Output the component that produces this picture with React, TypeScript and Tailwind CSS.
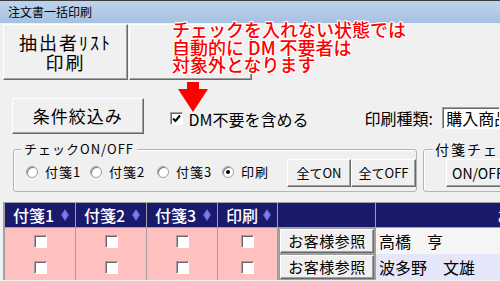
const raised =
  'bg-[#f0f0f0] border border-t-white border-l-white border-r-[#696969] border-b-[#696969] shadow-[inset_-1px_-1px_0_#a0a0a0]';
const sunken =
  'bg-white border border-t-[#a0a0a0] border-l-[#a0a0a0] border-r-white border-b-white shadow-[inset_1px_1px_0_#696969]';

function Radio({ label, checked, width }: { label: string; checked?: boolean; width: string }) {
  return (
    <div className={`flex items-center gap-[7px] mb-[3px] ${width}`}>
      <div className="w-[12px] h-[12px] rounded-full bg-white border border-[#a0a0a0] shadow-[inset_1px_1px_0_#808080] flex items-center justify-center">
        {checked && <div className="w-[4px] h-[4px] rounded-full bg-black" />}
      </div>
      <span className="text-[13px] leading-[14px] tracking-[1px]">{label}</span>
    </div>
  );
}

function CheckBox() {
  return <div className={`w-[13px] h-[13px] ${sunken}`} />;
}

function Diamond() {
  return (
    <svg width="8" height="12" viewBox="0 0 8 12" className="shrink-0">
      <polygon points="4,0 8,6 4,12 0,6" fill="#6a6ae0" />
      <polygon points="4,2 6,6 4,10 2,6" fill="#8080ee" />
    </svg>
  );
}

function HeadCell({ label }: { label: string }) {
  return (
    <div className="h-[25px] bg-[#1a1a6c] border-b border-[#a0a0a0] flex items-center justify-between pl-[8px] pr-[6px] text-white text-[16px] leading-[18px] font-medium">
      <span>{label}</span>
      <Diamond />
    </div>
  );
}

function PinkCell() {
  return (
    <div className="h-[26px] bg-[#ffc0c0] flex items-center justify-center">
      <CheckBox />
    </div>
  );
}

function Row({ name, tint }: { name: string; tint: string }) {
  return (
    <>
      <PinkCell />
      <PinkCell />
      <PinkCell />
      <PinkCell />
      <div className="h-[26px] bg-[#a0a0a0] pl-[2px] flex items-center">
        <button className={`w-[94px] h-[24px] ${raised} text-[15px] leading-[16px] tracking-[0.5px] text-black`}>
          お客様参照
        </button>
      </div>
      <div className={`h-[26px] ${tint} pl-[3px] flex items-center text-[16px] leading-[18px] text-black whitespace-nowrap`}>
        {name}
      </div>
    </>
  );
}

export default function App() {
  return (
    <div className="w-[500px] h-[281px] overflow-hidden bg-[#f0f0f0] relative font-['Noto_Sans_CJK_JP',sans-serif] text-black">
      {/* title bar */}
      <div className="h-[23px] border-t border-[#3c3c3c] bg-linear-to-b from-[#bed4ec] to-[#a6c1e0] pl-[8px] flex items-center text-[12px] leading-[14px]">
        注文書一括印刷
      </div>

      {/* big buttons */}
      <div className="flex pl-[3px] mt-[1px] gap-[1px]">
        <button className={`w-[125px] h-[56px] ${raised} flex flex-col items-center justify-center text-[18px] leading-[20px] tracking-[2px]`}>
          <span>抽出者ﾘｽﾄ</span>
          <span>印刷</span>
        </button>
        <button className={`w-[123px] h-[56px] ${raised}`} />
      </div>

      {/* filter row */}
      <div className="flex items-center mt-[18px] h-[36px]">
        <button className={`ml-[12px] w-[137px] h-[36px] ${raised} text-[17px] leading-[18px] tracking-[1px]`}>
          条件絞込み
        </button>
        <div className="ml-[26px] w-[203px] flex items-center gap-[6px] mt-[5px]">
          <div className={`w-[13px] h-[13px] ${sunken} flex items-center justify-center`}>
            <svg width="9" height="9" viewBox="0 0 9 9">
              <path d="M1 4.5 L3.5 7 L8 1.5" stroke="#000" strokeWidth="2" fill="none" />
            </svg>
          </div>
          <span className="text-[16px] leading-[18px]">DM不要を含める</span>
        </div>
        <div className="w-[81px] text-[16px] leading-[18px] mt-[3px]">印刷種類:</div>
        <div className={`w-[60px] h-[22px] mt-[4px] ${sunken} pl-[3px] flex items-center text-[16px] leading-[18px] whitespace-nowrap overflow-hidden`}>
          購入商品
        </div>
      </div>

      {/* check on/off groups */}
      <div className="flex mt-[15px]">
        <div className="relative ml-[13px] w-[415px] h-[43px] border border-[#b4b4b4] rounded-[3px] shadow-[inset_1px_1px_0_#fff]">
          <span className="absolute -top-[8px] left-[7px] bg-[#f0f0f0] px-[3px] text-[13px] leading-[14px] tracking-[1px]">
            チェックON/OFF
          </span>
          <div className="flex items-center h-full pl-[12px] pt-[5px]">
            <Radio label="付箋1" width="w-[64px]" />
            <Radio label="付箋2" width="w-[67px]" />
            <Radio label="付箋3" width="w-[65px]" />
            <Radio label="印刷" width="w-[65px]" checked />
            <button className={`w-[64px] h-[28px] ${raised} text-[13px] leading-[14px]`}>全てON</button>
            <button className={`w-[65px] h-[28px] ${raised} text-[13px] leading-[14px]`}>全てOFF</button>
          </div>
        </div>
        <div className="relative ml-[6px] w-[100px] h-[43px] border border-[#b4b4b4] rounded-[3px] shadow-[inset_1px_1px_0_#fff]">
          <span className="absolute -top-[9px] left-[9px] bg-[#f0f0f0] px-[2px] text-[14px] leading-[16px] tracking-[2px] whitespace-nowrap">
            付箋チェック
          </span>
          <div className="pl-[22px] pt-[9px]">
            <button className={`w-[80px] h-[28px] ${raised} text-[14px] leading-[16px] text-left pl-[5px]`}>
              ON/OFF
            </button>
          </div>
        </div>
      </div>

      {/* table */}
      <div className="mt-[10px] ml-[3px] border-l-2 border-t border-[#a0a0a0] bg-[#a0a0a0]">
        <div className="grid grid-cols-[70px_70px_70px_59px_97px_124px] gap-x-px">
          <HeadCell label="付箋1" />
          <HeadCell label="付箋2" />
          <HeadCell label="付箋3" />
          <HeadCell label="印刷" />
          <div className="h-[25px] bg-[#1a1a6c] border-b border-[#a0a0a0]" />
          <div className="h-[25px] bg-[#1a1a6c] border-b border-[#a0a0a0] pl-[121px] flex items-center text-white text-[16px] leading-[18px] whitespace-nowrap overflow-hidden">
            お客様名
          </div>
          <Row name="高橋　亨" tint="bg-[#f5f5f5]" />
          <Row name="波多野　文雄" tint="bg-[#e6e6fa]" />
        </div>
      </div>

      {/* callout */}
      <div className="absolute left-[172px] top-[21px] text-[18px] leading-[17.5px] font-medium text-[#ff0000] whitespace-nowrap [text-shadow:-1px_-1px_0_#fff,1px_-1px_0_#fff,-1px_1px_0_#fff,1px_1px_0_#fff,0_1px_0_#fff,0_-1px_0_#fff,1px_0_0_#fff,-1px_0_0_#fff]">
        <div>チェックを入れない状態では</div>
        <div>自動的に DM 不要者は</div>
        <div>対象外となります</div>
      </div>
      <svg className="absolute left-[177px] top-[82px]" width="32" height="31" viewBox="0 0 32 31">
        <polygon points="10,0 22,0 22,7 31,7 16,30 1,7 10,7" fill="#ff0000" />
      </svg>
    </div>
  );
}
